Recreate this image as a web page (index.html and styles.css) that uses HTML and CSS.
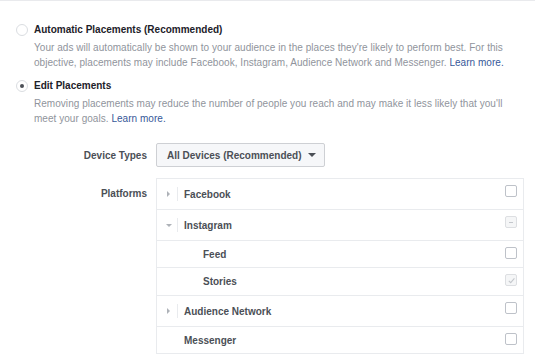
FILE: index.html
```html
<!DOCTYPE html>
<html lang="en">
<head>
    <meta charset="UTF-8">
    <meta name="viewport" content="width=device-width, initial-scale=1.0">
    <title>Placements</title>
    <link rel="stylesheet" href="styles.css">
</head>
<body>
    <div class="panel">
        <div class="option">
            <span class="radio"></span>
            <div class="option-body">
                <div class="option-title">Automatic Placements (Recommended)</div>
                <div class="option-desc">Your ads will automatically be shown to your audience in the places they're likely to perform best. For this objective, placements may include Facebook, Instagram, Audience Network and Messenger. <a href="#">Learn more.</a></div>
            </div>
        </div>
        <div class="option option-edit">
            <span class="radio checked"></span>
            <div class="option-body">
                <div class="option-title">Edit Placements</div>
                <div class="option-desc">Removing placements may reduce the number of people you reach and may make it less likely that you'll meet your goals. <a href="#">Learn more.</a></div>
            </div>
        </div>

        <div class="field field-devices">
            <div class="field-label">Device Types</div>
            <button class="select-btn">All Devices (Recommended) <span class="caret-down"></span></button>
        </div>

        <div class="field field-platforms">
            <div class="field-label field-label-top">Platforms</div>
            <div class="platforms">
                <div class="row">
                    <span class="toggle"><span class="arrow-right"></span></span>
                    <span class="row-name">Facebook</span>
                    <span class="check"></span>
                </div>
                <div class="row">
                    <span class="toggle"><span class="arrow-down"></span></span>
                    <span class="row-name">Instagram</span>
                    <span class="check check-mixed"><span class="dash"></span></span>
                </div>
                <div class="row row-sub">
                    <span class="row-name">Feed</span>
                    <span class="check"></span>
                </div>
                <div class="row row-sub row-stories">
                    <span class="row-name">Stories</span>
                    <span class="check check-disabled">
                        <svg width="9" height="9" viewBox="0 0 9 9"><path d="M1.8 4.8 L3.7 6.6 L7.4 2.4" fill="none" stroke="#c4c7cc" stroke-width="1.1"/></svg>
                    </span>
                </div>
                <div class="row">
                    <span class="toggle"><span class="arrow-right"></span></span>
                    <span class="row-name">Audience Network</span>
                    <span class="check"></span>
                </div>
                <div class="row row-sub row-plain">
                    <span class="row-name">Messenger</span>
                    <span class="check"></span>
                </div>
            </div>
        </div>
    </div>
</body>
</html>
```

FILE: styles.css
```css
body {
    margin: 0;
    background: #fff;
    font-family: "Liberation Sans", Arial, sans-serif;
    font-size: 10px;
    color: #4b4f56;
}
.panel {
    border-top: 1px solid #e9eaed;
    padding: 22px 0 0 16px;
}
.option {
    display: flex;
    gap: 6px;
}
.option-edit {
    margin-top: 9px;
}
.radio {
    flex: none;
    width: 10px;
    height: 10px;
    border: 1px solid #dadde1;
    border-radius: 50%;
    margin-top: 1px;
    position: relative;
}
.radio.checked::after {
    content: "";
    position: absolute;
    left: 3px;
    top: 3px;
    width: 4px;
    height: 4px;
    border-radius: 50%;
    background: #4b4f56;
}
.option-title {
    font-weight: bold;
    color: #1d2129;
    line-height: 14px;
}
.option-desc {
    margin-top: 3px;
    max-width: 474px;
    color: #90949c;
    line-height: 15px;
    letter-spacing: 0.04px;
}
.option-desc a {
    color: #365899;
    text-decoration: none;
}
.field {
    display: flex;
    align-items: flex-start;
}
.field-devices {
    align-items: center;
    margin-top: 17px;
}
.field-platforms {
    margin-top: 11px;
}
.field-label {
    width: 131px;
    text-align: right;
    padding-right: 9px;
    font-weight: bold;
    color: #4b4f56;
}
.field-label-top {
    padding-top: 10px;
}
.select-btn {
    height: 24px;
    padding: 0 8px 0 10px;
    background: #f6f7f9;
    border: 1px solid #ced0d4;
    border-radius: 2px;
    font-family: inherit;
    font-size: 10px;
    font-weight: bold;
    color: #4b4f56;
    display: flex;
    align-items: center;
    gap: 6px;
}
.caret-down {
    width: 0;
    height: 0;
    border-left: 4px solid transparent;
    border-right: 4px solid transparent;
    border-top: 4px solid #4b4f56;
}
.platforms {
    width: 366px;
    border: 1px solid #e9ebee;
}
.row {
    display: flex;
    align-items: center;
    height: 30px;
    border-top: 1px solid #e9ebee;
    padding-left: 9px;
    font-weight: bold;
}
.row:first-child {
    border-top: none;
}
.row-sub {
    height: 26px;
}
.row-stories {
    height: 27px;
}
.toggle {
    width: 11px;
    height: 14px;
    border-right: 1px solid #e9ebee;
    margin-right: 6px;
    display: flex;
    align-items: center;
}
.arrow-right {
    width: 0;
    height: 0;
    border-top: 3px solid transparent;
    border-bottom: 3px solid transparent;
    border-left: 3px solid #aeb2b8;
    margin-left: 1px;
}
.arrow-down {
    width: 0;
    height: 0;
    border-left: 3px solid transparent;
    border-right: 3px solid transparent;
    border-top: 3px solid #aeb2b8;
}
.row-sub .row-name {
    padding-left: 37px;
}
.row-plain .row-name {
    padding-left: 18px;
}
.row-name {
    flex: 1;
}
.check {
    align-self: flex-start;
    width: 10px;
    height: 10px;
    border: 1px solid #bec2c9;
    border-radius: 2px;
    margin: 6px 6px 0 0;
    display: flex;
    align-items: center;
    justify-content: center;
}
.check-mixed,
.check-disabled {
    border-color: #dddfe2;
    background: #f5f6f7;
}
.dash {
    width: 4px;
    height: 1px;
    background: #c4c7cc;
}
```
